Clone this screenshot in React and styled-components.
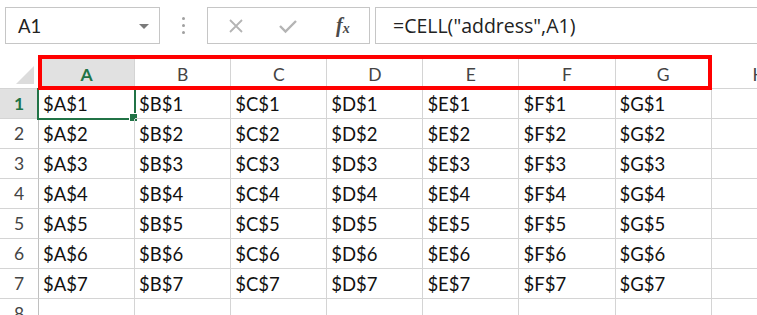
import styled, { createGlobalStyle } from "styled-components";

const GlobalStyle = createGlobalStyle`
  body {
    margin: 0;
    background: #fff;
    font-family: Lato, "Open Sans", sans-serif;
  }
`;

const COLS = ["A", "B", "C", "D", "E", "F", "G", "H"];
const ROWS = [1, 2, 3, 4, 5, 6, 7, 8];

// 엑셀 화면 전체
const Page = styled.div`
  width: 757px;
  height: 315px;
  overflow: hidden;
  position: relative;
`;

const Toolbar = styled.div`
  display: flex;
  align-items: center;
  padding: 7px 0 0 5px;
  height: 37px;
`;

const Field = styled.div`
  box-sizing: border-box;
  height: 37px;
  border: 1px solid #c6c6c6;
  background: #fff;
  display: flex;
  align-items: center;
`;

const NameBox = styled(Field)`
  width: 155px;
  padding: 0 10px 0 12px;
  justify-content: space-between;
  font-size: 18.5px;
  color: #222;
`;

const Arrow = styled.span`
  width: 0;
  height: 0;
  border-left: 5px solid transparent;
  border-right: 5px solid transparent;
  border-top: 5px solid #7a7a7a;
  margin-top: 1px;
`;

const Dots = styled.div`
  width: 47px;
  display: flex;
  flex-direction: column;
  align-items: center;
  gap: 4px;
  span {
    width: 3px;
    height: 3px;
    border-radius: 50%;
    background: #a0a0a0;
  }
`;

const Controls = styled(Field)`
  width: 163px;
  padding: 0 0 0 20px;
`;

const Ctl = styled.div`
  width: ${(p) => p.w}px;
  display: flex;
  align-items: center;
  justify-content: flex-start;
`;

const Fx = styled.span`
  font-family: "Liberation Serif", serif;
  font-style: italic;
  font-weight: bold;
  font-size: 20px;
  color: #4a4a4a;
  sub {
    font-size: 14px;
    vertical-align: -1px;
  }
`;

const Formula = styled(Field)`
  flex: 1;
  margin-left: 5px;
  border-right: none;
  padding-left: 17px;
  color: #222;
  font-family: "Open Sans", sans-serif;
  font-size: 19.5px;
`;

const Sheet = styled.div`
  margin-top: 15px;
  display: grid;
  grid-template-columns: 39px repeat(8, 96.1px);
  grid-template-rows: 30px repeat(8, 30px);
`;

const Corner = styled.div`
  box-sizing: border-box;
  border-right: 1px solid #d4d4d4;
  border-bottom: 1px solid #d4d4d4;
  position: relative;
  &::after {
    content: "";
    position: absolute;
    right: 4px;
    bottom: 4px;
    border-left: 18px solid transparent;
    border-bottom: 18px solid #dcdcdc;
  }
`;

const ColHead = styled.div`
  box-sizing: border-box;
  display: flex;
  align-items: center;
  justify-content: center;
  border-right: 1px solid #d4d4d4;
  border-bottom: 1px solid ${(p) => (p.active ? "#b8b8b8" : "#d4d4d4")};
  background: ${(p) => (p.active ? "#e1e1e1" : "#fff")};
  color: ${(p) => (p.active ? "#217346" : "#444")};
  font-weight: ${(p) => (p.active ? "bold" : "normal")};
  font-size: 17.5px;
  padding-top: 2px;
`;

const RowHead = styled.div`
  box-sizing: border-box;
  display: flex;
  align-items: center;
  justify-content: center;
  border-right: 1px solid #c0c0c0;
  border-bottom: 1px solid #d4d4d4;
  background: ${(p) => (p.active ? "#e1e1e1" : "#fff")};
  color: ${(p) => (p.active ? "#217346" : "#444")};
  font-weight: ${(p) => (p.active ? "bold" : "normal")};
  font-size: 17.5px;
`;

const Cell = styled.div`
  box-sizing: border-box;
  display: flex;
  align-items: center;
  padding: 1px 0 0 4px;
  border-right: 1px solid #d4d4d4;
  border-bottom: 1px solid #d4d4d4;
  font-size: 18.5px;
  color: #111;
  white-space: nowrap;
  position: relative;
  ${(p) =>
    p.selected &&
    `
    &::before {
      content: "";
      position: absolute;
      left: -2px;
      top: -1px;
      right: -2px;
      bottom: -2px;
      border: 2px solid #217346;
    }
    &::after {
      content: "";
      position: absolute;
      right: -4px;
      bottom: -4px;
      width: 7px;
      height: 7px;
      background: #217346;
      border: 1px solid #fff;
    }
  `}
`;

// 빨간 강조 박스 (주석 표시)
const Highlight = styled.div`
  position: absolute;
  left: 38px;
  top: 55px;
  width: 674px;
  height: 35px;
  box-sizing: border-box;
  border: 4px solid #ff0000;
  pointer-events: none;
`;

function App() {
  return (
    <Page>
      <GlobalStyle />
      <Toolbar>
        <NameBox>
          <span>A1</span>
          <Arrow />
        </NameBox>
        <Dots>
          <span />
          <span />
          <span />
        </Dots>
        <Controls>
          <Ctl w={50}>
            <svg width="16" height="16" viewBox="0 0 16 16">
              <path d="M2 2L14 14M14 2L2 14" stroke="#b4b4b4" strokeWidth="1.8" fill="none" />
            </svg>
          </Ctl>
          <Ctl w={58}>
            <svg width="20" height="16" viewBox="0 0 20 16">
              <path d="M2 8L7.5 13.5L18 3" stroke="#b4b4b4" strokeWidth="2.4" fill="none" />
            </svg>
          </Ctl>
          <Ctl w={30}>
            <Fx>
              f<sub>x</sub>
            </Fx>
          </Ctl>
        </Controls>
        <Formula>=CELL("address",A1)</Formula>
      </Toolbar>
      <Sheet>
        <Corner />
        {COLS.map((c) => (
          <ColHead key={c} active={c === "A"}>
            {c}
          </ColHead>
        ))}
        {ROWS.map((r) => (
          <>
            <RowHead key={"r" + r} active={r === 1}>
              {r}
            </RowHead>
            {COLS.map((c) => (
              <Cell key={c + r} selected={c === "A" && r === 1}>
                {c !== "H" && r !== 8 ? `$${c}$${r}` : ""}
              </Cell>
            ))}
          </>
        ))}
      </Sheet>
      <Highlight />
    </Page>
  );
}

export default App;
